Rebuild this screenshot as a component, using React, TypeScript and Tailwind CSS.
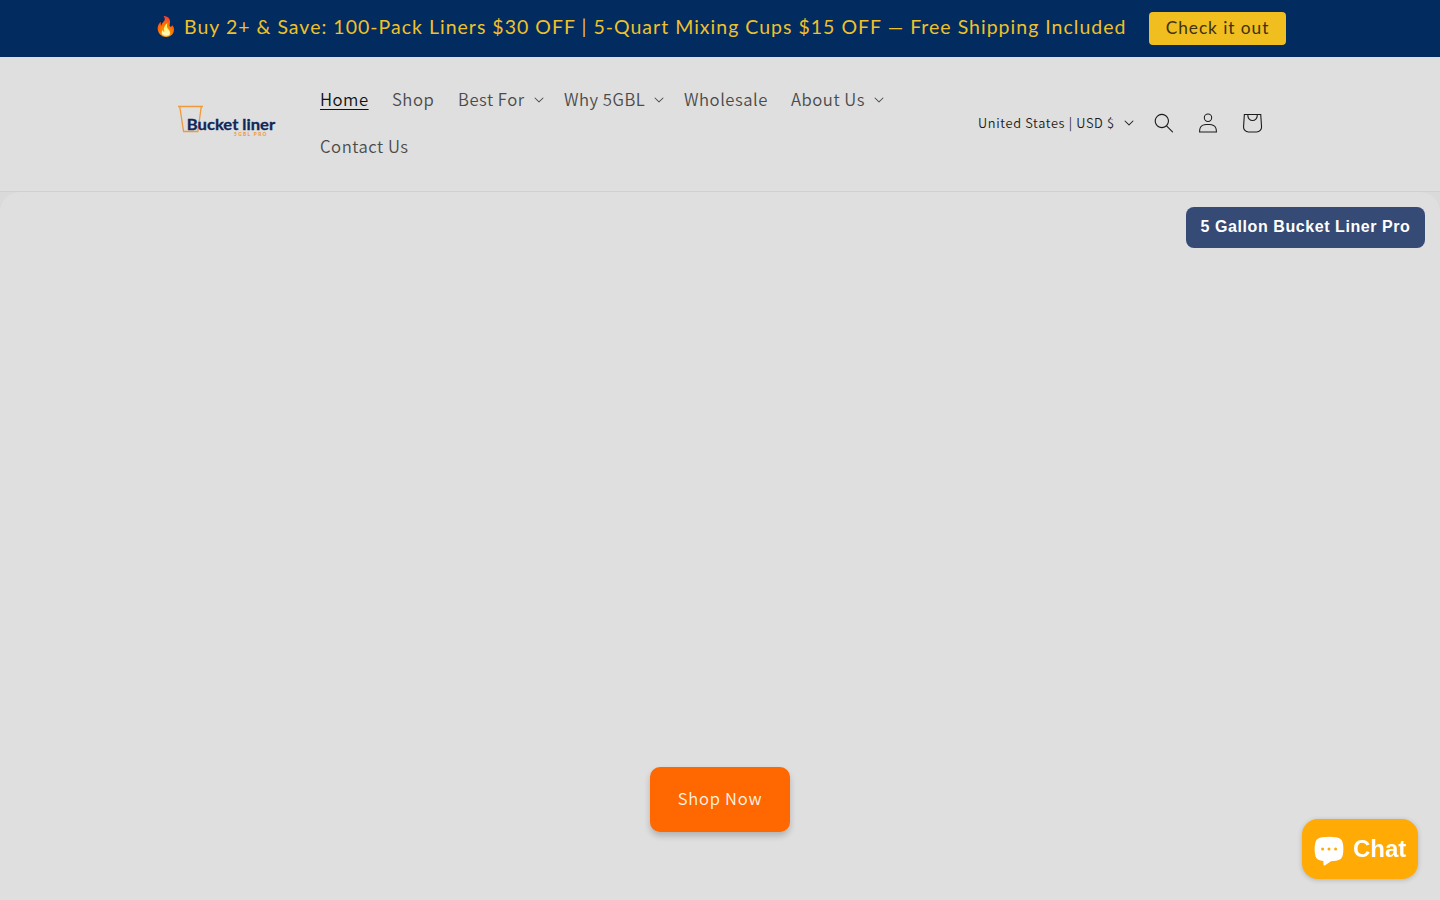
const SRC = "font-['Noto_Sans_CJK_SC',sans-serif]";

function Caret({ className = "" }: { className?: string }) {
  return (
    <svg viewBox="0 0 10 6" className={`h-[6px] w-[10px] shrink-0 ${className}`} fill="currentColor">
      <path fillRule="evenodd" clipRule="evenodd" d="M9.354.646a.5.5 0 00-.708 0L5 4.293 1.354.646a.5.5 0 00-.708.708l4 4a.5.5 0 00.708 0l4-4a.5.5 0 000-.708z" />
    </svg>
  );
}

function Logo() {
  return (
    <svg viewBox="0 0 100 34" className="h-[34px] w-[100px] overflow-visible font-['Lato',sans-serif]" fill="none">
      <path d="M1 2.5H26M2.8 3L6.6 27.5H20.8L24.2 3" stroke="#f0993a" strokeWidth="1.3" />
      <text x="9.8" y="26.2" textLength="88.3" lengthAdjust="spacingAndGlyphs" fontSize="16" fontWeight="700" fill="#0d2859" stroke="#0d2859" strokeWidth="0.3">
        Bucket liner
      </text>
      <text x="57" y="32.4" textLength="32.5" fontSize="4.8" fontWeight="900" fill="#f0993a">
        5GBL PRO
      </text>
    </svg>
  );
}

const links = [
  { label: "Home", active: true, width: "w-[72px]" },
  { label: "Shop", width: "w-[66px]" },
  { label: "Best For", menu: true, width: "w-[106px]" },
  { label: "Why 5GBL", menu: true, width: "w-[120px]" },
  { label: "Wholesale", width: "w-[107px]" },
  { label: "About Us", menu: true, width: "w-[113px]" },
  { label: "Contact Us", width: "w-[112px]" },
];

export default function App() {
  return (
    <div className="flex h-[900px] w-full flex-col overflow-hidden bg-[#dfdfdf]">
      <div className="flex h-[57px] shrink-0 items-start bg-[#022b60] pl-[154px] pt-3 font-['Lato',sans-serif]">
        <div className="flex h-[30px] w-[995px] items-center whitespace-nowrap text-[19.5px] tracking-[1.01px] text-[#efc12a]">
          <span className="w-[30px] shrink-0 pb-[2px] text-[19px] tracking-normal">🔥</span>
          <span>Buy 2+ &amp; Save: 100-Pack Liners $30 OFF | 5-Quart Mixing Cups $15 OFF — Free Shipping Included</span>
        </div>
        <button className="flex h-[33px] w-[137px] items-center justify-center whitespace-nowrap rounded-[4px] bg-[#f0be1f] pb-px text-[17.3px] tracking-[0.95px] text-[#3d3212]">
          Check it out
        </button>
      </div>

      <header className={`flex h-[135px] shrink-0 items-center border-b border-[#d0d0d0] pb-[2px] pl-[177px] pr-[166px] ${SRC}`}>
        <div className="w-[131px] shrink-0 pb-1">
          <Logo />
        </div>
        <nav className="flex w-[600px] shrink-0 flex-wrap pl-3 text-[16.7px] font-[350] tracking-[0.5px] text-[#4b4b4b]">
          {links.map((l) => (
            <a key={l.label} className={`flex h-[47px] items-center whitespace-nowrap ${l.width} ${l.active ? "text-[#111]" : ""}`}>
              <span className={l.active ? "underline decoration-1 underline-offset-[3px]" : ""}>{l.label}</span>
              {l.menu && <Caret className="ml-auto mr-5" />}
            </a>
          ))}
        </nav>
        <div className="ml-auto flex items-center text-[#1c1c1c]">
          <button className="flex w-[164px] items-center whitespace-nowrap text-[12.8px] font-[350] tracking-[0.65px]">
            <span>United States | USD $</span>
            <Caret className="ml-auto mr-[8px]" />
          </button>
          <span className="flex size-11 items-center justify-center">
            <svg viewBox="0 0 18 19" className="size-5" fill="currentColor">
              <path fillRule="evenodd" clipRule="evenodd" d="M11.03 11.68A5.784 5.784 0 112.85 3.5a5.784 5.784 0 018.18 8.18zm.26 1.12a6.78 6.78 0 11.72-.7l5.4 5.4a.5.5 0 11-.71.7l-5.41-5.4z" />
            </svg>
          </span>
          <span className="flex size-11 items-center justify-center">
            <svg viewBox="0 0 18 19" className="size-5" fill="currentColor">
              <path fillRule="evenodd" clipRule="evenodd" d="M6 4.5a3 3 0 116 0 3 3 0 01-6 0zm3-4a4 4 0 100 8 4 4 0 000-8zm5.58 12.15c1.12.82 1.83 2.24 1.91 4.85H1.51c.08-2.6.79-4.03 1.9-4.85C4.66 11.75 6.5 11.5 9 11.5s4.35.26 5.58 1.15zM9 10.5c-2.5 0-4.65.24-6.17 1.35C1.27 12.98.5 14.93.5 18v.5h17V18c0-3.07-.77-5.02-2.33-6.15-1.52-1.1-3.67-1.35-6.17-1.35z" />
            </svg>
          </span>
          <svg viewBox="0 0 40 40" className="size-11" fill="currentColor">
            <path fillRule="evenodd" d="M15.75 11.8h-3.16l-.77 11.6a5 5 0 0 0 4.99 5.34h7.38a5 5 0 0 0 4.99-5.33L28.4 11.8zm0 1h-2.22l-.71 10.67a4 4 0 0 0 3.99 4.27h7.38a4 4 0 0 0 4-4.27l-.72-10.67h-2.22v.63a4.75 4.75 0 1 1-9.5 0zm8.5 0h-7.5v.63a3.75 3.75 0 1 0 7.5 0z" />
          </svg>
        </div>
      </header>

      <main className="flex flex-1 flex-col bg-[#dadada]">
        <section className="flex flex-1 flex-col rounded-t-[20px] bg-[#dfdfdf]">
          <div className="flex justify-end pr-[15px] pt-[15px]">
            <div className="flex h-[41px] w-[239px] items-center justify-center whitespace-nowrap rounded-lg bg-[#354a75] pb-[2px] font-['Liberation_Sans',sans-serif] text-[16px] font-bold tracking-[0.57px] text-white">
              5 Gallon Bucket Liner Pro
            </div>
          </div>
          <div className="mt-auto flex justify-center pb-[68px]">
            <button className={`flex h-[65px] w-[140px] items-center justify-center rounded-[10px] bg-[#ff6700] pb-[3px] text-[16.5px] font-[350] tracking-[0.8px] text-[#fff4e6] shadow-[0_4px_6px_rgba(0,0,0,0.2)] ${SRC}`}>
              Shop Now
            </button>
          </div>
        </section>
      </main>

      <button className="fixed bottom-[21px] right-[22px] flex h-[60px] w-[116px] items-center rounded-[16px] bg-[#ffaa05] pl-3 font-['Liberation_Sans',sans-serif] text-[24px] font-bold text-white shadow-[0_1px_5px_rgba(0,0,0,0.2)]">
        <svg viewBox="0 0 30 30" className="mr-[9px] mt-[3px] size-[30px] shrink-0">
          <path d="M8 1.2Q15 .4 22 1.2Q28.3 1.8 29 8Q29.7 13 29 18Q28.3 24 22 24.8L17 25.2Q14 27 11.2 29.3Q9.5 30.2 9.4 28V25L7.5 24.8Q1.6 24 1 18Q.3 13 1 8Q1.7 1.8 8 1.2Z" fill="#fff" />
          <circle cx="8.6" cy="13" r="1.5" fill="#ffaa05" />
          <circle cx="15" cy="13" r="1.5" fill="#ffaa05" />
          <circle cx="21.6" cy="13" r="1.5" fill="#ffaa05" />
        </svg>
        Chat
      </button>
    </div>
  );
}
